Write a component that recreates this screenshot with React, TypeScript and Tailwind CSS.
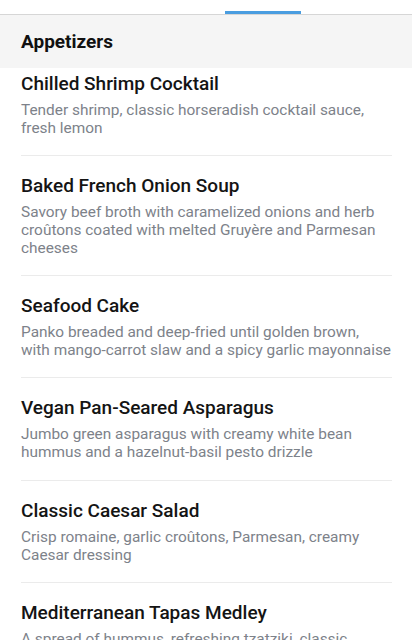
const items = [
  {
    name: "Chilled Shrimp Cocktail",
    lines: ["Tender shrimp, classic horseradish cocktail sauce,", "fresh lemon"],
  },
  {
    name: "Baked French Onion Soup",
    lines: [
      "Savory beef broth with caramelized onions and herb",
      "croûtons coated with melted Gruyère and Parmesan",
      "cheeses",
    ],
  },
  {
    name: "Seafood Cake",
    lines: [
      "Panko breaded and deep-fried until golden brown,",
      "with mango-carrot slaw and a spicy garlic mayonnaise",
    ],
  },
  {
    name: "Vegan Pan-Seared Asparagus",
    lines: [
      "Jumbo green asparagus with creamy white bean",
      "hummus and a hazelnut-basil pesto drizzle",
    ],
  },
  {
    name: "Classic Caesar Salad",
    lines: ["Crisp romaine, garlic croûtons, Parmesan, creamy", "Caesar dressing"],
  },
  {
    name: "Mediterranean Tapas Medley",
    lines: [
      "A spread of hummus, refreshing tzatziki, classic",
      "baba ghanoush and warm pita bread",
    ],
  },
];

export default function App() {
  return (
    <div
      className="h-[640px] overflow-hidden bg-white"
      style={{ fontFamily: "Roboto, 'Liberation Sans', sans-serif" }}
    >
      <div className="flex h-[15px] items-end border-b border-[#d6d6d6]">
        <div className="ml-[225px] h-[3px] w-[76px] bg-[#4a9de0]" />
      </div>

      <div className="flex h-[53px] items-center bg-[#f5f5f5] px-[21px] pt-[2px]">
        <h2 className="text-[19px] font-bold text-[#111]">Appetizers</h2>
      </div>

      <ul className="pl-[21px] pr-[20px]">
        {items.map((item, i) => (
          <li
            key={item.name}
            className={
              (i === 0 ? "pt-[4px] " : "pt-[18px] ") +
              "border-b border-[#ebebeb] " +
              (i === 3 ? "pb-[19px]" : "pb-[18px]")
            }
          >
            <h3 className="text-[19px] font-medium leading-6 text-[#141414]">
              {item.name}
            </h3>
            <p className="mt-[5px] text-[15.4px] leading-[18px] whitespace-nowrap text-[#7d828a]">
              {item.lines.map((line, j) => (
                <span key={j} className="block">
                  {line}
                </span>
              ))}
            </p>
          </li>
        ))}
      </ul>
    </div>
  );
}
